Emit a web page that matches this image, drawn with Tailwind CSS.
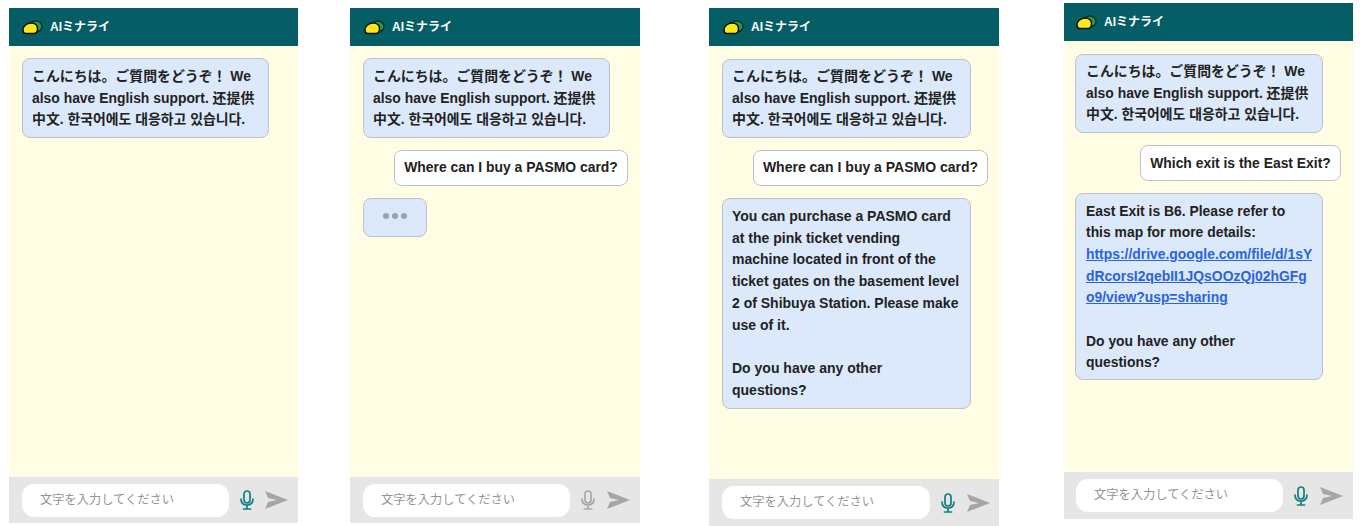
<!DOCTYPE html>
<html lang="ja">
<head>
<meta charset="UTF-8">
<title>AIミナライ</title>
<script src="https://cdn.jsdelivr.net/npm/@tailwindcss/browser@4"></script>
</head>
<body class="bg-white overflow-hidden font-['Liberation_Sans','Noto_Sans_CJK_JP',sans-serif]">
<div class="flex items-start h-[526px] w-[1365px] overflow-hidden pl-[9px]">

  <!-- screen 1 -->
  <section class="w-[289px] h-[515px] mt-[8px] flex flex-col bg-[#fffee4]">
    <header class="h-[38px] shrink-0 bg-[#055e66] flex items-center pl-[13px] gap-[7px] text-white text-[12px] font-bold">
      <svg width="21" height="15" viewBox="0 0 21 15"><ellipse cx="14" cy="6.5" rx="6" ry="5.5" fill="#2e9a3e" stroke="#0b2f2c" stroke-width="1.5"/><path d="M1 10C1 6 5 3 9 3c3.500 0 6.500 2 6.500 5.500 0 3-1 5-3.500 5H3.500C2 13.500 1 12 1 10z" fill="#ffe81a" stroke="#111" stroke-width="1.5"/></svg>
      <span>AIミナライ</span>
    </header>
    <div class="flex-1 flex flex-col items-start px-[13px] pt-[12px] gap-[12px] text-[13.9px] leading-[21.7px] font-bold text-[#222] whitespace-nowrap">
      <div class="w-[247px] h-[80px] px-[9px] py-[7px] rounded-[8px] bg-[#dce9fb] border border-[#bcc2c8]">こんにちは。ご質問をどうぞ！ We<br>also have English support. 还提供<br>中文. 한국어에도 대응하고 있습니다.</div>
    </div>
    <footer class="h-[46px] shrink-0 bg-[#e6e6e6] flex items-center pl-[13px] text-[12.25px] text-[#949494]">
      <div class="w-[207px] h-[33px] rounded-[12px] bg-white flex items-center pl-[18px]">文字を入力してください</div>
      <svg class="ml-[10px]" width="16" height="20" viewBox="0 0 16 20" fill="none" stroke="#0f7f80" stroke-width="1.7" stroke-linecap="round"><rect x="5" y="1" width="6" height="12" rx="3"/><path d="M2 9c0 4 2.500 6 6 6s6-2 6-6M8 15v4M4.500 19h7"/></svg>
      <svg class="ml-[10px]" width="23" height="18" viewBox="0 0 23 18"><path d="M0 0l23 9L0 18l3-7 9-2-9-2z" fill="#a6a6a6"/></svg>
    </footer>
  </section>

  <!-- screen 2 -->
  <section class="w-[290px] h-[515px] mt-[8px] ml-[52px] flex flex-col bg-[#fffee4]">
    <header class="h-[38px] shrink-0 bg-[#055e66] flex items-center pl-[14px] gap-[7px] text-white text-[12px] font-bold">
      <svg width="21" height="15" viewBox="0 0 21 15"><ellipse cx="14" cy="6.5" rx="6" ry="5.5" fill="#2e9a3e" stroke="#0b2f2c" stroke-width="1.5"/><path d="M1 10C1 6 5 3 9 3c3.500 0 6.500 2 6.500 5.500 0 3-1 5-3.500 5H3.500C2 13.500 1 12 1 10z" fill="#ffe81a" stroke="#111" stroke-width="1.5"/></svg>
      <span>AIミナライ</span>
    </header>
    <div class="flex-1 flex flex-col items-start px-[13px] pt-[12px] gap-[12px] text-[13.9px] leading-[21.7px] font-bold text-[#222] whitespace-nowrap">
      <div class="w-[247px] h-[80px] px-[9px] py-[7px] rounded-[8px] bg-[#dce9fb] border border-[#bcc2c8]">こんにちは。ご質問をどうぞ！ We<br>also have English support. 还提供<br>中文. 한국어에도 대응하고 있습니다.</div>
      <div class="self-end mr-[-1px] w-[234px] h-[36px] flex items-center justify-center rounded-[8px] bg-white border border-[#bcc2c8]">Where can I buy a PASMO card?</div>
      <div class="w-[64px] h-[39px] rounded-[8px] bg-[#dce9fb] border border-[#bcc2c8] flex items-center justify-center gap-[3px] pb-[4px]">
        <span class="w-[6px] h-[6px] rounded-full bg-[#9aa3ad]"></span><span class="w-[6px] h-[6px] rounded-full bg-[#9aa3ad]"></span><span class="w-[6px] h-[6px] rounded-full bg-[#9aa3ad]"></span>
      </div>
    </div>
    <footer class="h-[46px] shrink-0 bg-[#e6e6e6] flex items-center pl-[13px] text-[12.25px] text-[#949494]">
      <div class="w-[207px] h-[33px] rounded-[12px] bg-white flex items-center pl-[18px]">文字を入力してください</div>
      <svg class="ml-[10px]" width="16" height="20" viewBox="0 0 16 20" fill="none" stroke="#a8a8a8" stroke-width="1.7" stroke-linecap="round"><rect x="5" y="1" width="6" height="12" rx="3"/><path d="M2 9c0 4 2.500 6 6 6s6-2 6-6M8 15v4M4.500 19h7"/></svg>
      <svg class="ml-[11px]" width="23" height="18" viewBox="0 0 23 18"><path d="M0 0l23 9L0 18l3-7 9-2-9-2z" fill="#a6a6a6"/></svg>
    </footer>
  </section>

  <!-- screen 3 -->
  <section class="w-[290px] h-[518px] mt-[8px] ml-[69px] flex flex-col bg-[#fffee4]">
    <header class="h-[38px] shrink-0 bg-[#055e66] flex items-center pl-[14px] gap-[7px] text-white text-[12px] font-bold">
      <svg width="21" height="15" viewBox="0 0 21 15"><ellipse cx="14" cy="6.5" rx="6" ry="5.5" fill="#2e9a3e" stroke="#0b2f2c" stroke-width="1.5"/><path d="M1 10C1 6 5 3 9 3c3.500 0 6.500 2 6.500 5.500 0 3-1 5-3.500 5H3.500C2 13.500 1 12 1 10z" fill="#ffe81a" stroke="#111" stroke-width="1.5"/></svg>
      <span>AIミナライ</span>
    </header>
    <div class="flex-1 flex flex-col items-start px-[13px] pt-[13px] gap-[12px] text-[14px] leading-[21.7px] font-bold text-[#222] whitespace-nowrap">
      <div class="w-[249px] h-[79px] px-[9px] py-[6px] rounded-[8px] bg-[#dce9fb] border border-[#bcc2c8]">こんにちは。ご質問をどうぞ！ We<br>also have English support. 还提供<br>中文. 한국어에도 대응하고 있습니다.</div>
      <div class="self-end mr-[-2px] w-[235px] h-[36px] flex items-center justify-center rounded-[8px] bg-white border border-[#bcc2c8]">Where can I buy a PASMO card?</div>
      <div class="w-[249px] h-[211px] px-[9px] py-[7px] rounded-[8px] bg-[#dce9fb] border border-[#bcc2c8]">You can purchase a PASMO card<br>at the pink ticket vending<br>machine located in front of the<br>ticket gates on the basement level<br>2 of Shibuya Station. Please make<br>use of it.<br><br>Do you have any other<br>questions?</div>
    </div>
    <footer class="h-[47px] shrink-0 bg-[#e6e6e6] flex items-center pl-[13px] text-[12.25px] text-[#949494]">
      <div class="w-[208px] h-[33px] rounded-[12px] bg-white flex items-center pl-[18px]">文字を入力してください</div>
      <svg class="ml-[10px]" width="16" height="20" viewBox="0 0 16 20" fill="none" stroke="#0f7f80" stroke-width="1.7" stroke-linecap="round"><rect x="5" y="1" width="6" height="12" rx="3"/><path d="M2 9c0 4 2.500 6 6 6s6-2 6-6M8 15v4M4.500 19h7"/></svg>
      <svg class="ml-[11px]" width="23" height="18" viewBox="0 0 23 18"><path d="M0 0l23 9L0 18l3-7 9-2-9-2z" fill="#a6a6a6"/></svg>
    </footer>
  </section>

  <!-- screen 4 -->
  <section class="w-[289px] h-[516px] mt-[3px] ml-[65px] flex flex-col bg-[#fffee4]">
    <header class="h-[38px] shrink-0 bg-[#055e66] flex items-center pl-[12px] gap-[7px] text-white text-[12px] font-bold">
      <svg width="21" height="15" viewBox="0 0 21 15"><ellipse cx="14" cy="6.5" rx="6" ry="5.5" fill="#2e9a3e" stroke="#0b2f2c" stroke-width="1.5"/><path d="M1 10C1 6 5 3 9 3c3.500 0 6.500 2 6.500 5.500 0 3-1 5-3.500 5H3.500C2 13.500 1 12 1 10z" fill="#ffe81a" stroke="#111" stroke-width="1.5"/></svg>
      <span>AIミナライ</span>
    </header>
    <div class="flex-1 flex flex-col items-start px-[11px] pt-[13px] gap-[12px] text-[13.9px] leading-[21.7px] font-bold text-[#222] whitespace-nowrap">
      <div class="w-[248px] h-[79px] pl-[10px] pr-[4px] py-[6px] rounded-[8px] bg-[#dce9fb] border border-[#bcc2c8]">こんにちは。ご質問をどうぞ！ We<br>also have English support. 还提供<br>中文. 한국어에도 대응하고 있습니다.</div>
      <div class="self-end mr-[1px] w-[201px] h-[36px] flex items-center justify-center rounded-[8px] bg-white border border-[#bcc2c8]"><span class="mt-[1px]">Which exit is the East Exit?</span></div>
      <div class="w-[248px] h-[187px] pl-[10px] pr-[4px] py-[6.5px] rounded-[8px] bg-[#dce9fb] border border-[#bcc2c8]">East Exit is B6. Please refer to<br>this map for more details:<br><a href="#" class="text-[#2a63e0] underline">https://drive.google.com/file/d/1sY<br>dRcorsI2qebII1JQsOOzQj02hGFg<br>o9/view?usp=sharing</a><br><br>Do you have any other<br>questions?</div>
    </div>
    <footer class="h-[47px] shrink-0 bg-[#e6e6e6] flex items-center pl-[12px] text-[12.25px] text-[#949494]">
      <div class="w-[207px] h-[33px] rounded-[12px] bg-white flex items-center pl-[18px]">文字を入力してください</div>
      <svg class="ml-[10px]" width="16" height="20" viewBox="0 0 16 20" fill="none" stroke="#0f7f80" stroke-width="1.7" stroke-linecap="round"><rect x="5" y="1" width="6" height="12" rx="3"/><path d="M2 9c0 4 2.500 6 6 6s6-2 6-6M8 15v4M4.500 19h7"/></svg>
      <svg class="ml-[11px]" width="23" height="18" viewBox="0 0 23 18"><path d="M0 0l23 9L0 18l3-7 9-2-9-2z" fill="#a6a6a6"/></svg>
    </footer>
  </section>

</div>
</body>
</html>
